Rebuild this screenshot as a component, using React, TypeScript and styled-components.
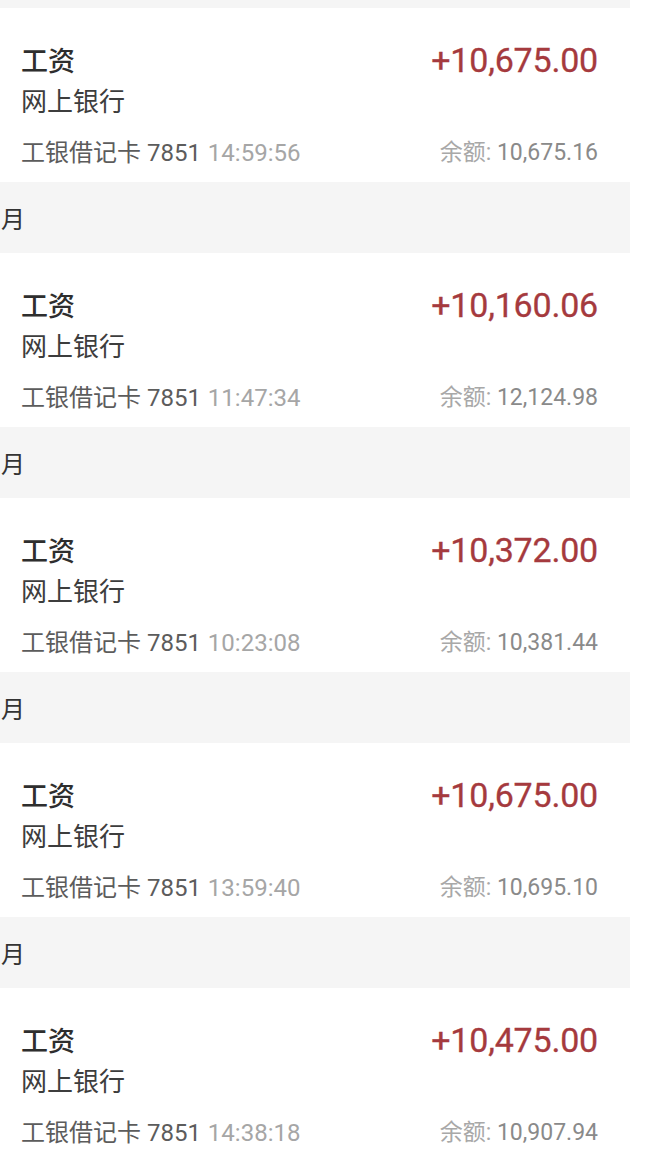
import React from 'react';
import styled, { createGlobalStyle } from 'styled-components';

interface Txn {
  amount: string;
  time: string;
  balance: string;
}

const txns: Txn[] = [
  { amount: '+10,675.00', time: '14:59:56', balance: '10,675.16' },
  { amount: '+10,160.06', time: '11:47:34', balance: '12,124.98' },
  { amount: '+10,372.00', time: '10:23:08', balance: '10,381.44' },
  { amount: '+10,675.00', time: '13:59:40', balance: '10,695.10' },
  { amount: '+10,475.00', time: '14:38:18', balance: '10,907.94' },
];

const GlobalStyle = createGlobalStyle`
  html, body {
    margin: 0;
    padding: 0;
    background: #ffffff;
  }
  body {
    font-family: Roboto, "Noto Sans CJK SC", sans-serif;
  }
`;

const App: React.FC = () => {
  return (
    <>
      <GlobalStyle />
      <List>
        <TopStrip />
        {txns.map((t, i) => (
          <React.Fragment key={i}>
            {i > 0 && (
              <MonthBar>
                <MonthText>月</MonthText>
              </MonthBar>
            )}
            <Card>
              <TopRow>
                <Title>工资</Title>
                <Amount>{t.amount}</Amount>
              </TopRow>
              <Channel>网上银行</Channel>
              <BottomRow>
                <CardInfo>
                  工银借记卡 7851 <Time>{t.time}</Time>
                </CardInfo>
                <Balance>
                  <BalanceLabel>余额:</BalanceLabel> {t.balance}
                </Balance>
              </BottomRow>
            </Card>
          </React.Fragment>
        ))}
      </List>
    </>
  );
};

export default App;

const List = styled.div`
  width: 630px;
  display: flex;
  flex-direction: column;
`;

const TopStrip = styled.div`
  height: 8px;
  background: #f5f5f5;
`;

const MonthBar = styled.div`
  height: 71px;
  background: #f5f5f5;
  display: flex;
  align-items: center;
  padding-left: 1px;
`;

const MonthText = styled.span`
  font-size: 24px;
  color: #333333;
  font-family: "Noto Sans CJK SC", sans-serif;
`;

const Card = styled.div`
  height: 174px;
  box-sizing: border-box;
  padding: 38px 32px 12px 21px;
  background: #ffffff;
  display: flex;
  flex-direction: column;
`;

const TopRow = styled.div`
  display: flex;
  justify-content: space-between;
  align-items: center;
  height: 32px;
`;

const Title = styled.div`
  font-size: 27px;
  font-weight: 500;
  color: #2e2e2e;
  line-height: 32px;
`;

const Amount = styled.div`
  font-size: 34px;
  font-weight: 400;
  color: #a53a3e;
  line-height: 32px;
  letter-spacing: -0.2px;
  margin-top: -4px;
  -webkit-text-stroke: 0.3px #a53a3e;
`;

const Channel = styled.div`
  margin-top: 8px;
  font-size: 26px;
  color: #3d3d3d;
  line-height: 32px;
`;

const BottomRow = styled.div`
  margin-top: 20px;
  display: flex;
  justify-content: space-between;
  align-items: center;
  height: 30px;
`;

const CardInfo = styled.div`
  font-size: 24px;
  color: #5c5c5c;
  line-height: 30px;
`;

const Time = styled.span`
  color: #a6a6a6;
  margin-left: 1px;
`;

const Balance = styled.div`
  font-size: 23px;
  color: #8a8a8a;
  line-height: 30px;
`;

const BalanceLabel = styled.span`
  color: #a8a8a8;
`;
